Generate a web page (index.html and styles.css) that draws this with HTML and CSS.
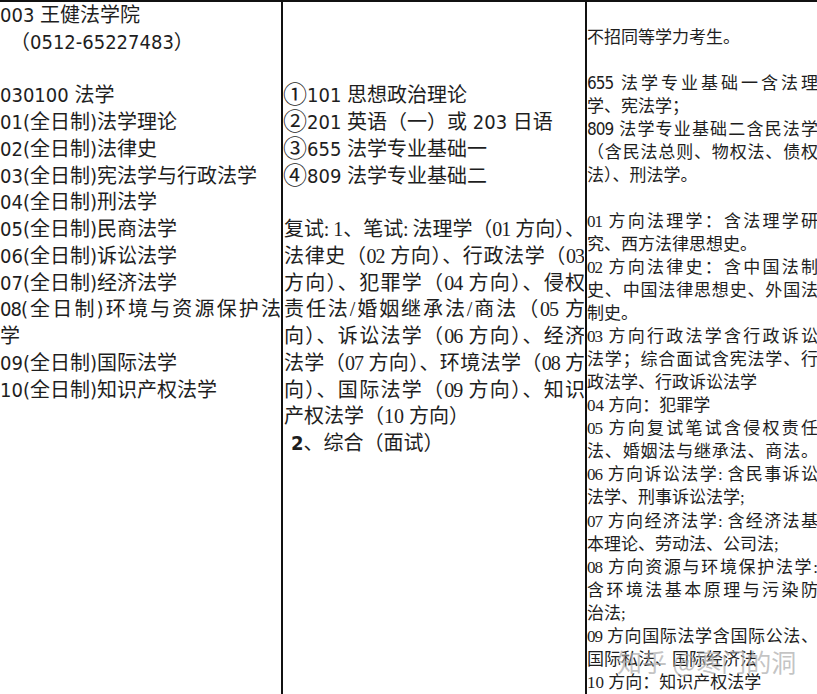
FILE: index.html
```html
<!DOCTYPE html>
<html lang="zh">
<head>
<meta charset="utf-8">
<title>王健法学院</title>
<link rel="stylesheet" href="styles.css">
</head>
<body>
<div class="table">
  <div class="cell c1">
    <div class="ln">003 王健法学院</div>
    <div class="ln">　（0512-65227483）</div>
    <div class="ln blank"></div>
    <div class="ln">030100 法学</div>
    <div class="ln">01(全日制)法学理论</div>
    <div class="ln">02(全日制)法律史</div>
    <div class="ln">03(全日制)宪法学与行政法学</div>
    <div class="ln">04(全日制)刑法学</div>
    <div class="ln">05(全日制)民商法学</div>
    <div class="ln">06(全日制)诉讼法学</div>
    <div class="ln">07(全日制)经济法学</div>
    <div class="ln j">08(全日制)环境与资源保护法</div>
    <div class="ln">学</div>
    <div class="ln">09(全日制)国际法学</div>
    <div class="ln">10(全日制)知识产权法学</div>
  </div>
  <div class="cell c2">
    <div class="ln blank"></div>
    <div class="ln blank"></div>
    <div class="ln blank"></div>
    <div class="ln"><span class="circ">①</span>101 思想政治理论</div>
    <div class="ln"><span class="circ">②</span>201 英语（一）或 203 日语</div>
    <div class="ln"><span class="circ">③</span>655 法学专业基础一</div>
    <div class="ln"><span class="circ">④</span>809 法学专业基础二</div>
    <div class="ln blank"></div>
    <div class="serif">
      <div class="ln j">复试: 1、笔试: 法理学（01 方向）、</div>
      <div class="ln j">法律史（02 方向）、行政法学（03</div>
      <div class="ln j">方向）、犯罪学（04 方向）、侵权</div>
      <div class="ln j">责任法/婚姻继承法/商法（05 方</div>
      <div class="ln j">向）、诉讼法学（06 方向）、经济</div>
      <div class="ln j">法学（07 方向）、环境法学（08 方</div>
      <div class="ln j">向）、国际法学（09 方向）、知识</div>
      <div class="ln">产权法学（10 方向）</div>
    </div>
    <div class="ln indent"><span class="num">2</span>、综合（面试）</div>
  </div>
  <div class="cell c3">
    <div class="ln blank"></div>
    <div class="ln">不招同等学力考生。</div>
    <div class="ln blank"></div>
    <div class="ln j">655 法学专业基础一含法理</div>
    <div class="ln">学、宪法学；</div>
    <div class="ln j">809 法学专业基础二含民法学</div>
    <div class="ln j">（含民法总则、物权法、债权</div>
    <div class="ln">法）、刑法学。</div>
    <div class="ln blank"></div>
    <div class="serif">
      <div class="ln j">01 方向法理学：含法理学研</div>
      <div class="ln">究、西方法律思想史。</div>
      <div class="ln j">02 方向法律史：含中国法制</div>
      <div class="ln j">史、中国法律思想史、外国法</div>
      <div class="ln">制史。</div>
      <div class="ln j">03 方向行政法学含行政诉讼</div>
      <div class="ln j">法学；综合面试含宪法学、行</div>
      <div class="ln">政法学、行政诉讼法学</div>
      <div class="ln">04 方向：犯罪学</div>
      <div class="ln j">05 方向复试笔试含侵权责任</div>
      <div class="ln j">法、婚姻法与继承法、商法。</div>
      <div class="ln j">06 方向诉讼法学: 含民事诉讼</div>
      <div class="ln">法学、刑事诉讼法学;</div>
      <div class="ln j">07 方向经济法学: 含经济法基</div>
      <div class="ln">本理论、劳动法、公司法;</div>
      <div class="ln j">08 方向资源与环境保护法学:</div>
      <div class="ln j">含环境法基本原理与污染防</div>
      <div class="ln">治法;</div>
      <div class="ln j">09 方向国际法学含国际公法、</div>
      <div class="ln">国际私法、国际经济法</div>
      <div class="ln">10 方向：知识产权法学</div>
    </div>
    <div class="watermark">知乎 @寒门的洞</div>
  </div>
</div>
</body>
</html>
```

FILE: styles.css
```css
* { box-sizing: border-box; margin: 0; padding: 0; }
html, body { background: #fff; }
body {
  width: 817px;
  height: 694px;
  overflow: hidden;
  color: #1e1e1e;
  font-family: "DejaVu Sans Condensed", "Noto Sans CJK SC", sans-serif;
}
.table {
  display: grid;
  grid-template-columns: 281px 304px 232px;
  border-top: 2px solid #111;
  height: 694px;
}
.cell { position: relative; }
.c2, .c3 { border-left: 2px solid #111; }
.c1, .c2 { font-size: 20px; }
.c1 .ln, .c2 .ln { height: 26.75px; line-height: 26.75px; white-space: nowrap; }
.c1 { padding-right: 1px; }
.c2 { padding-left: 1px; padding-right: 1px; }
.c3 { font-size: 17px; padding-top: 0.5px; }
.c3 .ln { height: 23.05px; line-height: 23.05px; white-space: nowrap; }
.ln.j {
  text-align: justify;
  text-align-last: justify;
  white-space: normal;
  letter-spacing: -1px;
  overflow: hidden;
}
.serif { font-family: "Liberation Serif", "Noto Sans CJK SC", serif; }
.circ {
  font-family: "Noto Sans CJK SC", sans-serif;
  font-size: 24px;
  line-height: 0;
  display: inline-block;
  margin-left: -1px;
  vertical-align: -1px;
}
.indent { padding-left: 7px; }
.num { font-family: "DejaVu Sans Condensed", sans-serif; font-weight: bold; }
.watermark {
  position: absolute;
  left: 30px;
  top: 643px;
  font-family: "Noto Sans CJK SC", sans-serif;
  font-size: 25px;
  line-height: 32px;
  color: rgba(170, 170, 170, 0.7);
  white-space: nowrap;
}
```
